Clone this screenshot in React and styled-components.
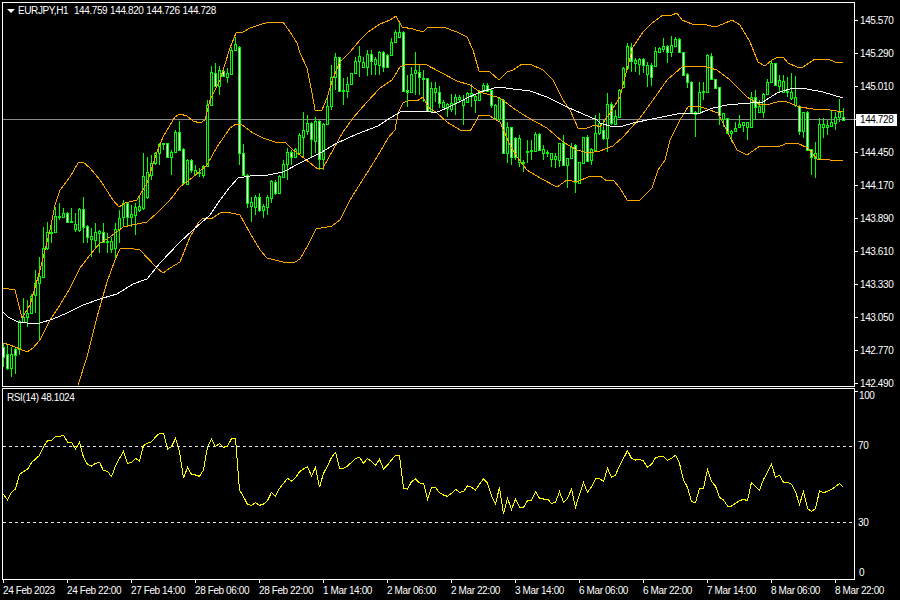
import React from 'react';
import styled, { createGlobalStyle } from 'styled-components';

const GlobalStyle = createGlobalStyle`
  html, body { margin: 0; padding: 0; background: #000; }
`;

const Screen = styled.div`
  width: 900px;
  height: 600px;
  box-sizing: border-box;
  padding: 2px 0 0 2px;
  background: #000;
  color: #fff;
  display: flex;
  flex-direction: column;
  gap: 1px;
  overflow: hidden;
  font-family: "Liberation Sans", Arial, sans-serif;
  font-size: 10px;
  letter-spacing: -0.4px;
  line-height: 12px;
`;
const Row = styled.div`
  display: flex;
  flex: none;
  height: ${p => p.$h}px;
`;
const Pane = styled.div`
  position: relative;
  flex: none;
  width: 853px;
  height: 100%;
  box-sizing: border-box;
  border: 1px solid #fff;
  background: #000;
`;
const Plot = styled.svg`
  display: block;
  width: 851px;
  height: ${p => p.$h}px;
  shape-rendering: crispEdges;
`;
const Legend = styled.div`
  position: absolute;
  left: 15px;
  top: 2px;
  white-space: pre;
  word-spacing: 0.5px;
  display: flex;
  align-items: center;
  &::before {
    content: "";
    position: absolute;
    left: -11.5px;
    top: 4px;
    border-style: solid;
    border-width: 4px 4px 0 4px;
    border-color: #fff transparent transparent transparent;
  }
`;
const RsiLegend = styled.div`
  position: absolute;
  left: 4px;
  top: 3px;
  white-space: pre;
`;
const PriceAxis = styled.div`
  position: relative;
  flex: none;
  width: 45px;
  padding-top: 2px;
  display: flex;
  flex-direction: column;
`;
const PriceTick = styled.div`
  flex: none;
  height: 33px;
  display: flex;
  align-items: center;
  &::before {
    content: "";
    flex: none;
    width: 3px;
    height: 1px;
    margin-right: 2px;
    background: #fff;
  }
`;
const LastPrice = styled.div`
  position: absolute;
  left: 1px;
  top: 112px;
  width: 41px;
  height: 12px;
  padding-left: 4px;
  box-sizing: border-box;
  background: #fff;
  color: #000;
`;
const RsiAxis = styled.div`
  position: relative;
  flex: none;
  width: 45px;
  display: flex;
  flex-direction: column;
  &::before {
    content: "";
    position: absolute;
    left: 0;
    top: 3px;
    width: 3px;
    height: 1px;
    background: #fff;
  }
`;
const RsiLevel = styled.div`
  flex: none;
  height: ${p => p.$h}px;
  padding-left: ${p => p.$pad}px;
  display: flex;
  align-items: center;
`;
const TimeAxis = styled.div`
  display: flex;
  flex: none;
  padding-left: 1px;
  margin-top: -1px;
`;
const TimeTick = styled.div`
  flex: none;
  width: 64px;
  box-sizing: border-box;
  white-space: nowrap;
  &::before {
    content: "";
    display: block;
    width: 1px;
    height: 3px;
    margin-bottom: 2px;
    background: #fff;
  }
`;

const Wick = styled.rect`fill: #00ff00;`;
const Body = styled.rect`fill: #00ff00;`;
const Core = styled.rect`fill: ${p => (p.$white ? '#fff' : '#000')};`;
const Curve = styled.polyline`
  fill: none;
  stroke: ${p => p.$color};
  stroke-width: 1;
`;
const PriceLine = styled.line`
  stroke: #8c8c8c;
  stroke-width: 1;
`;
const LevelLine = styled.line`
  stroke: #e6e6e6;
  stroke-width: 1;
  stroke-dasharray: 3 3;
`;

/* [bodyTop, bodyBottom, high, low, isDownBar] */
const a = [
[440,470,430,500,1],[462,503,435,510,1],[462,503,440,530,0],[447,465,440,523,1],[362,447,360,465,0],
[350,365,295,370,0],[340,352,300,380,0],[287,338,283,340,0],[250,285,210,340,0],[228,250,170,420,0],
[145,230,80,235,0],[97,143,67,150,0],[97,100,70,130,0],[48,95,20,100,0],[47,50,10,60,0],
[40,52,25,55,0],[40,65,35,70,1],[62,65,25,65,1],[72,87,40,95,0],[28,90,25,95,0],
[28,80,-10,130,1],[78,110,75,130,1],[107,117,85,172,0],[97,120,70,145,0],[94,100,90,160,0],
[95,125,70,130,1],[122,125,100,160,1],[122,147,110,160,0],[88,145,70,175,0],[55,87,30,130,0],
[8,52,0,80,0],[8,52,5,80,1],[42,50,15,80,0],[20,45,10,105,0],[18,30,-10,35,0],
].map(([t,b,h,l,w]) => [200+t/3,200+b/3,200+h/3,200+l/3,w]);

const b = [
[176,208,153,210,0],[172,197,157,199,0],[163,175,155,180,0],[153,163,152,165,0],[144,153,143,165,0],
[143,144,143,150,0],[143,157,143,158,1],[152,157,150,175,0],[132,152,130,153,0],[132,150,121,151,1],
[149,183,148,184,1],[160,184,159,185,0],[160,170,159,173,1],[170,174,165,176,0],[172,173,168,177,0],
[166,175,165,178,0],[105,166,100,167,0],[72,105,66,106,0],[73,86,63,87,1],[70,86,66,95,0],
[71,76,68,77,1],[73,77,68,83,0],[50,74,47,75,0],[44,50,37,51,0],[47,153,46,165,1],
[153,175,144,176,1],[175,203,174,208,1],[202,206,197,222,0],[197,207,195,215,0],[197,210,193,212,1],
[206,210,204,218,0],[197,207,195,215,0],[181,198,180,203,0],[182,193,180,195,1],[176,193,175,194,0],
[164,177,160,178,0],[152,164,148,180,0],[152,157,150,165,1],[149,157,148,158,0],[135,153,133,154,0],
];

const c = [
[390,410,337,470,0],[370,392,345,405,0],[370,418,365,470,1],[362,422,350,460,0],[362,478,360,510,1],
[373,478,370,510,0],[317,372,290,375,0],[230,317,195,330,0],[172,232,160,270,0],[172,274,170,276,1],
[270,273,235,315,0],[253,272,230,295,0],[220,253,218,255,0],[183,220,172,222,0],[168,183,138,230,0],
[187,200,170,205,0],[163,200,150,228,0],[163,182,150,225,1],[178,193,170,225,0],[155,195,152,225,0],
[155,200,153,215,1],[165,200,163,205,1],[127,165,115,167,0],[97,127,90,128,0],[95,110,68,112,0],
[95,272,93,274,1],[270,275,225,320,1],[222,275,200,277,0],[210,220,155,285,0],[215,232,195,285,1],
[235,238,210,305,0],[235,332,233,334,1],[265,332,245,334,0],[265,275,245,305,0],[275,308,258,325,1],
[307,320,300,325,0],[313,325,310,350,0],[310,328,282,335,0],[292,310,282,345,0],[292,298,285,310,0],
[300,315,285,375,0],[280,305,275,310,0],[280,288,252,320,0],[288,300,285,340,0],[280,300,270,302,0],
[255,272,250,275,0],[255,272,250,275,1],[270,316,268,325,1],[316,355,312,357,0],[295,357,290,365,0],
[300,460,298,462,1],[382,458,365,490,0],[382,470,380,495,1],[413,472,411,480,1],[415,487,405,500,0],
[487,490,480,515,1],[452,454,420,490,0],[450,453,420,480,0],[402,452,395,454,0],[402,450,398,452,1],
[448,458,435,480,0],[456,459,450,470,0],[460,478,458,500,0],[468,478,460,505,0],[430,480,428,500,0],
[430,495,405,497,1],[475,495,473,565,0],[440,473,430,475,0],[435,545,433,580,1],[487,548,485,550,0],
[412,488,410,490,0],[412,483,405,485,1],[447,480,445,495,0],[400,450,345,452,0],[370,400,340,405,0],
].map(r => [r[0]/3,r[1]/3,r[2]/3,r[3]/3,r[4]]);

const d = [
[390,415,360,420,1],[313,415,280,455,0],[313,370,305,375,1],[348,372,330,375,0],[270,350,268,352,0],
[203,262,200,265,0],[138,205,130,207,0],[140,182,130,215,1],[180,190,175,215,0],[178,192,175,225,0],
[178,195,175,220,1],[195,222,185,262,0],[195,230,190,258,1],[153,197,140,199,0],[143,155,140,157,0],
[138,147,115,155,0],[138,155,135,190,1],[135,155,108,170,0],[117,137,112,139,0],[117,157,115,159,1],
[157,225,155,227,1],[222,247,220,265,1],[245,335,243,337,1],[335,343,333,410,0],[275,340,245,342,0],
[273,276,245,300,0],[165,275,163,277,0],[168,238,160,240,1],[238,263,236,265,1],[262,345,260,375,1],
[340,357,338,380,0],[355,400,353,402,1],[393,400,391,425,0],[383,393,365,395,0],[372,382,345,385,0],
[367,375,365,395,0],[367,380,365,420,0],[292,380,275,382,0],[292,320,270,360,1],[318,337,300,340,0],
[282,335,280,355,0],[247,283,237,285,0],[190,247,180,249,0],[190,255,188,257,1],[240,257,225,275,0],
[243,275,225,277,0],[272,275,230,290,0],[277,293,220,300,0],[292,315,228,320,0],[317,392,315,405,1],
[337,392,335,415,0],[335,450,333,452,1],[448,470,446,525,1],[460,473,427,535,0],[373,475,355,477,0],
[372,380,355,415,0],[375,380,360,405,0],[367,377,333,379,0],[350,368,335,390,0],[337,350,298,365,0],
[350,360,325,363,1],
].map(r => [r[0]/3,r[1]/3,r[2]/3,r[3]/3,r[4]]);

const candles = [...a, ...b, ...c, ...d];

const upper = "3,288 15,290 22,318 30,305 40,270 50,230 55,205 60,190 70,177 78,163 83,162 90,168 100,180 113,200 119,207 125,203 137,200 147,183 157,152 163,137 175,117 180,114 187,116 193,121 200,123 205,120 210,100 220,80 230,48 236,33 243,32 250,28 262,24 270,22 283,22 290,32 297,43 300,53 307,68 312,93 315,110 322,110 327,98 333,78 340,62 350,52 360,40 368,32 380,24 390,20 396,16 402,27 413,29 423,32 428,27 443,27 457,32 467,37 473,50 479,71 490,72 499,80 507,72 513,70 522,64 530,64 543,70 553,80 563,100 570,110 578,128 587,128 595,125 600,127 610,113 620,97 625,77 633,47 643,32 652,23 663,15 672,15 677,13 682,20 692,24 703,24 715,27 723,24 732,20 740,25 750,42 758,62 765,66 772,60 778,57 783,57 788,63 797,67 803,67 815,59 828,59 835,62 843,62";
const middle = "3,343 10,345 20,349 27,352 33,348 40,340 50,320 60,305 70,288 80,268 90,255 100,243 110,237 123,227 137,224 147,222 157,213 170,200 180,187 193,177 207,165 217,147 230,128 236,124 242,125 253,133 263,138 275,142 285,142 293,150 300,155 310,163 318,169 323,168 333,150 343,132 353,118 367,102 380,88 392,80 400,67 407,64 425,64 440,72 457,81 470,85 480,92 490,95 500,98 513,108 527,117 547,128 563,142 577,150 588,153 600,151 613,146 623,137 640,118 653,100 667,80 682,67 688,66 703,66 717,70 730,80 747,97 760,105 770,104 780,101 787,102 800,107 813,109 830,110 843,112";
const lower = "78,385 87,357 97,317 107,282 115,260 120,249 128,248 140,250 157,268 163,273 170,268 180,262 190,237 198,223 203,218 211,219 220,213 227,212 240,215 250,233 260,250 267,258 283,262 295,262 300,259 308,245 316,229 332,226 340,220 350,200 367,173 380,152 388,138 395,130 398,113 403,103 410,100 417,101 423,97 428,107 437,113 447,122 460,130 470,131 475,123 479,115 488,115 500,122 510,145 517,157 527,170 540,178 557,187 567,180 577,182 590,176 600,176 607,181 613,180 620,188 627,200 632,201 640,200 652,188 658,170 665,160 670,140 680,120 688,107 698,106 707,109 718,113 728,133 737,150 747,155 760,146 780,146 788,143 797,143 808,148 817,159 830,160 843,161";
const average = "3,312 8,317 18,322 27,323 40,323 53,319 67,313 83,305 103,298 117,294 133,284 147,279 160,263 180,242 193,230 210,215 220,200 230,187 238,178 250,176 268,175 283,172 300,163 320,153 337,143 357,134 378,126 390,118 402,111 427,111 435,113 447,108 463,100 480,92 498,87 513,89 530,91 547,97 567,107 583,114 597,120 600,123 613,127 623,126 633,123 657,118 682,113 700,113 713,108 727,105 750,103 763,102 777,93 793,88 807,89 823,92 843,98";

const rsiZoom = [
343,360,337,327,283,275,268,248,237,226,200,182,181,170,169,166,186,186,207,187,232,253,258,250,247,272,274,290,258,235,214,250,247,235,243,197,190,185,171,160,160,207,200,175,215,295,262,283,285,289,270,200,178,200,190,202,198,176,175,330,350,373,376,368,376,372,362,337,349,325,310,295,303,293,275,
267,260,288,262,322,280,258,232,217,265,265,258,247,235,232,250,235,245,256,238,267,255,240,226,226,325,327,305,297,309,310,358,323,322,338,345,349,340,328,337,335,317,322,330,313,297,309,347,372,322,403,355,388,358,382,382,362,361,335,355,357,357,370,367,335,367,355,327,382,343,307,337,320,297,295,
305,265,292,285,258,235,212,235,240,238,243,262,253,233,230,229,241,235,226,250,300,322,365,368,325,325,268,305,318,352,360,378,378,370,362,358,362,307,320,330,298,277,253,292,286,307,307,313,335,373,335,385,395,385,333,338,334,328,320,310,322,
];
const rsiPoints = rsiZoom.map((y, i) => `${3.5 + 4 * i},${380 + y / 3}`).join(' ');

const prices = ['145.570','145.290','145.010',null,'144.450','144.170','143.890','143.610','143.330','143.050','142.770','142.490'];
const times = ['24 Feb 2023','24 Feb 22:00','27 Feb 14:00','28 Feb 06:00','28 Feb 22:00','1 Mar 14:00','2 Mar 06:00','2 Mar 22:00','3 Mar 14:00','6 Mar 06:00','6 Mar 22:00','7 Mar 14:00','8 Mar 06:00','8 Mar 22:00'];
const levels = [['100',15,4],['70',86,3],['30',68,3],['0',32,4]];

function Candle({ i, data }) {
  const x = 3 + 4 * i;
  const top = Math.round(data[0]);
  const bottom = Math.max(Math.round(data[1]), top + 1);
  const hi = Math.min(Math.round(data[2]), top);
  const lo = Math.max(Math.round(data[3]), bottom);
  return (
    <g>
      <Wick x={x} y={hi} width="1" height={lo - hi} />
      <Body x={x - 1} y={top} width="3" height={bottom - top + 1} />
      {bottom - top > 1 && <Core $white={data[4]} x={x} y={top + 1} width="1" height={bottom - top - 1} />}
    </g>
  );
}

export default function App() {
  return (
    <Screen>
      <GlobalStyle />
      <Row $h={385}>
        <Pane>
          <Plot $h={383} viewBox="3 3 851 383">
            <PriceLine x1="3" x2="854" y1="119.5" y2="119.5" />
            {candles.map((k, i) => <Candle key={i} i={i} data={k} />)}
            <Curve $color="#ffa500" points={upper} />
            <Curve $color="#ffa500" points={middle} />
            <Curve $color="#ffa500" points={lower} />
            <Curve $color="#ffffff" points={average} />
          </Plot>
          <Legend>{'EURJPY,H1  144.759 144.820 144.726 144.728'}</Legend>
        </Pane>
        <PriceAxis>
          {prices.map((p, i) => <PriceTick key={i}>{p}</PriceTick>)}
          <LastPrice>144.728</LastPrice>
        </PriceAxis>
      </Row>
      <Row $h={192}>
        <Pane>
          <Plot $h={190} viewBox="3 389 851 190">
            <LevelLine x1="3" x2="854" y1="446.5" y2="446.5" />
            <LevelLine x1="3" x2="854" y1="522.5" y2="522.5" />
            <Curve $color="#ffff00" points={rsiPoints} />
          </Plot>
          <RsiLegend>RSI(14) 48.1024</RsiLegend>
        </Pane>
        <RsiAxis>
          {levels.map(([t, h, pad]) => <RsiLevel key={t} $h={h} $pad={pad}>{t}</RsiLevel>)}
        </RsiAxis>
      </Row>
      <TimeAxis>
        {times.map(t => <TimeTick key={t}>{t}</TimeTick>)}
      </TimeAxis>
    </Screen>
  );
}
